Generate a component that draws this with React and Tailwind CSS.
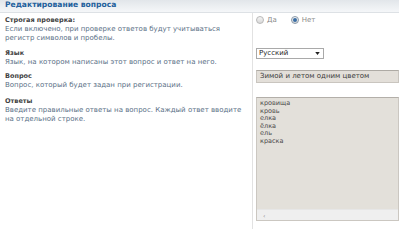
import React from "react";

const font = { fontFamily: '"DejaVu Sans", Verdana, sans-serif' };

function Row({ label, desc, children, className = "" }) {
  return (
    <div className={`flex ${className}`}>
      <div className="w-[252px] shrink-0 pl-[5px] pt-[3px]">
        <div className="text-[6.5px] leading-[8.5px] font-bold text-[#3f3f3f]">{label}</div>
        <div className="text-[7px] leading-[9px] text-[#5a6f86]">{desc}</div>
      </div>
      <div className="flex-1 border-l border-[#e2e2e2] pl-[3px]">{children}</div>
    </div>
  );
}

export default function App() {
  return (
    <div className="w-[399px] h-[229px] bg-white overflow-hidden" style={font}>
      <div className="h-[13px] bg-gradient-to-b from-[#e2e6ea] to-[#f5f7f9] border-b border-[#dde1e5] pl-[5px] pt-[1px]">
        <span className="block text-[7.6px] font-bold text-[#23609c] leading-[8px]">Редактирование вопроса</span>
      </div>
      <Row
        className="h-[33px]"
        label="Строгая проверка:"
        desc={<>Если включено, при проверке ответов будут учитываться<br />регистр символов и пробелы.</>}
      >
        <div className="flex items-center pt-[3px] text-[7px] leading-[8px] text-[#8a8a8a]">
          <span className="w-[8px] h-[8px] rounded-full border border-[#b8b8b8] bg-gradient-to-b from-[#f4f4f4] to-[#d8d8d8]" />
          <span className="ml-[3px]">Да</span>
          <span className="ml-[14px] w-[8px] h-[8px] rounded-full border border-[#8a9aaa] bg-gradient-to-b from-[#f4f4f4] to-[#d8d8d8] flex items-center justify-center">
            <span className="w-[4px] h-[4px] rounded-full bg-[#3a6ea5]" />
          </span>
          <span className="ml-[3px]">Нет</span>
        </div>
      </Row>
      <Row
        className="h-[23px]"
        label="Язык"
        desc="Язык, на котором написаны этот вопрос и ответ на него."
      >
        <div className="mt-[2px] w-[68px] h-[11px] border border-[#a9a9a9] bg-white flex items-center justify-between pl-[2px] pr-[3px]">
          <span className="text-[7px] leading-none text-[#222]">Русский</span>
          <svg width="5" height="3" viewBox="0 0 6 4"><path d="M0 0h6L3 4z" fill="#222" /></svg>
        </div>
      </Row>
      <Row
        className="h-[25px]"
        label="Вопрос"
        desc="Вопрос, который будет задан при регистрации."
      >
        <div className="mt-[1px] h-[13px] border border-[#c9c5bf] border-t-[#aeaaa4] bg-[#e3dfd9] pl-[3px] text-[7px] leading-[11px] text-[#3a3a3a] whitespace-nowrap">
          Зимой и летом одним цветом
        </div>
      </Row>
      <Row
        className="h-[135px]"
        label="Ответы"
        desc={<>Введите правильные ответы на вопрос. Каждый ответ вводите<br />на отдельной строке.</>}
      >
        <div className="mt-[3px] h-[124px] border border-[#cbc7c1] border-t-[#b3afa9] bg-[#e3e0da] flex flex-col">
          <div className="flex-1 pl-[3px] pt-[2px] text-[6.5px] leading-[7.6px] text-[#4a4a4a]">
            <div>кровища</div>
            <div>кровь</div>
            <div>елка</div>
            <div>ёлка</div>
            <div>ель</div>
            <div>краска</div>
          </div>
          <div className="h-[11px] bg-[#efefef] border-t border-[#e6e6e6] flex items-center pl-[6px] text-[6px] text-[#777]">‹</div>
        </div>
      </Row>
    </div>
  );
}
